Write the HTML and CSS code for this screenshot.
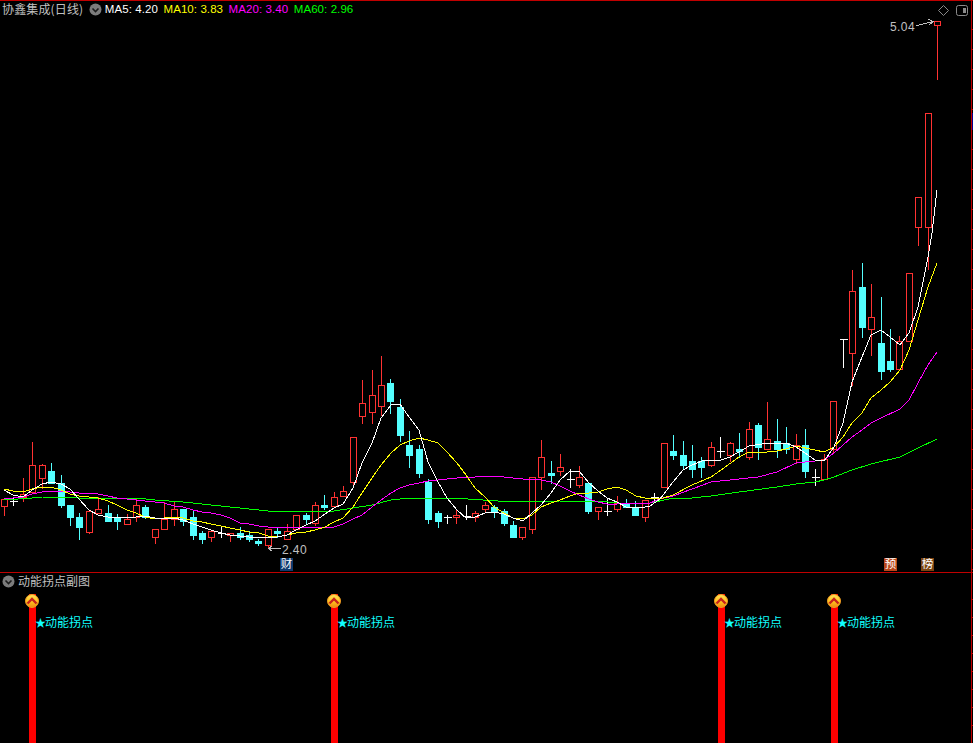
FILE: index.html
```html
<!DOCTYPE html>
<html lang="zh">
<head>
<meta charset="utf-8">
<title>协鑫集成(日线)</title>
<link rel="stylesheet" href="styles.css">
</head>
<body>
<svg class="defs" width="0" height="0"><defs><linearGradient id="capGrad" x1="0" y1="0" x2="0" y2="1"><stop offset="0" stop-color="#ffe45a"/><stop offset=".55" stop-color="#ffc21e"/><stop offset="1" stop-color="#f08a10"/></linearGradient></defs></svg>
<div class="terminal">
  <section class="main-panel">
    <svg id="chart" class="chart" width="973" height="572" viewBox="0 0 973 572"></svg>
    <header class="legend">
      <span class="stock-name">协鑫集成(日线)</span>
      <svg class="chevron-btn" width="13" height="13" viewBox="0 0 13 13"><circle cx="6.5" cy="6.5" r="6" fill="#7c7c7c"/><path d="M3.5 5.5 6.5 8.5 9.5 5.5" fill="none" stroke="#1c1c1c" stroke-width="1.6"/></svg>
      <span class="ma ma5">MA5: 4.20</span>
      <span class="ma ma10">MA10: 3.83</span>
      <span class="ma ma20">MA20: 3.40</span>
      <span class="ma ma60">MA60: 2.96</span>
    </header>
    <svg class="diamond" width="11" height="11" viewBox="0 0 11 11"><path d="M5.5 .5 10.5 5.5 5.5 10.5 .5 5.5Z" fill="none" stroke="#8a8a8a"/></svg>
    <svg class="toggle" width="13" height="12" viewBox="0 0 13 12"><rect x=".5" y=".5" width="11" height="10" rx="2" fill="none" stroke="#8a8a8a"/><rect x="7" y="3" width="3" height="5" fill="#8a8a8a"/></svg>
    <span class="price-label high-label">5.04</span>
    <span class="price-label low-label">2.40</span>
    <span class="tag tag-cai">财</span>
    <span class="tag tag-yu">预</span>
    <span class="tag tag-bang">榜</span>
  </section>
  <section class="sub-panel">
    <header class="sub-title">
      <svg class="chevron-btn" width="13" height="13" viewBox="0 0 13 13"><circle cx="6.5" cy="6.5" r="6" fill="#7c7c7c"/><path d="M3.5 5.5 6.5 8.5 9.5 5.5" fill="none" stroke="#1c1c1c" stroke-width="1.6"/></svg>
      <span class="stock-name">动能拐点副图</span>
    </header>
    <div id="signals"></div>
  </section>
  <div id="axis" class="axis"></div>
</div>
<script src="chart.js"></script>
</body>
</html>
```
FILE: styles.css
```css
* { box-sizing: border-box; }
html, body { margin: 0; padding: 0; background: #000; }
body { width: 973px; height: 743px; overflow: hidden; font-family: "Liberation Sans", sans-serif; }
.defs { position: absolute; }
.terminal { position: relative; width: 973px; height: 743px; background: #000; display: flex; flex-direction: column; border-top: 1px solid #c00000; }
.main-panel { position: relative; height: 572px; flex: none; border-bottom: 1px solid #c00000; }
.sub-panel { position: relative; flex: 1; }
.chart { position: absolute; left: 0; top: -1px; display: block; }
.legend { position: relative; display: flex; align-items: center; height: 16px; padding-left: 2px; }
.stock-name { color: #c0c0c0; font: 12px/16px "Noto Sans CJK SC", sans-serif; white-space: nowrap; }
.legend .stock-name { letter-spacing: .15px; }
.chevron-btn { flex: none; }
.legend .chevron-btn { margin-left: 6px; margin-right: 2.5px; }
.ma { font: 11.5px/16px "Liberation Sans", sans-serif; letter-spacing: .08px; margin-right: 5.5px; white-space: nowrap; }
.ma5 { color: #fff; }
.ma10 { color: #ff0; }
.ma20 { color: #f0f; }
.ma60 { color: #0f0; }
.diamond { position: absolute; left: 938px; top: 4px; }
.toggle { position: absolute; left: 956px; top: 4px; }
.price-label { position: absolute; color: #c0c0c0; font: 12px/12px "Liberation Sans", sans-serif; letter-spacing: .4px; }
.high-label { left: 890px; top: 20px; }
.low-label { left: 282px; top: 543px; }
.tag { position: absolute; width: 13px; height: 13px; color: #fff; font: 11.5px/13px "Liberation Sans", "Noto Sans CJK SC", sans-serif; text-align: center; top: 557px; }
.tag-cai { left: 280px; background: #0f3a6e; }
.tag-yu { left: 884px; background: #b8461a; }
.tag-bang { left: 921px; background: #7a4412; }
.sub-title { display: flex; align-items: center; height: 16px; padding-left: 2px; gap: 3px; }
.signal { position: absolute; top: 21px; bottom: 0; width: 7px; background: #fe0000; }
.signal-cap { position: absolute; top: 21px; width: 14px; height: 14px; }
.signal-label { position: absolute; top: 41px; color: #1ff; font: 12px/16px "Noto Sans CJK SC", sans-serif; white-space: nowrap; }
.signal-star { display: inline-block; width: 9px; font-size: 11px; text-indent: -1px; }
.axis { position: absolute; left: 971px; top: -1px; width: 2px; height: 743px; border-left: 1px solid #c00000; }
.tick { position: absolute; left: 0; width: 2px; height: 1px; background: #c00000; }
.axis-mark { position: absolute; left: 0; top: 113px; width: 2px; height: 17px; background: #000090; }
.wick { stroke-width: 1; shape-rendering: crispEdges; }
.up { stroke: #ff3232; fill: #000; }
.down { stroke: #54ffff; fill: #54ffff; }
.doji { stroke: #fff; fill: none; }
.ma-line { fill: none; stroke-width: 1; shape-rendering: crispEdges; stroke-linejoin: round; }
.l5 { stroke: #fff; }
.l10 { stroke: #ff0; }
.l20 { stroke: #f0f; }
.l60 { stroke: #0f0; }
.arrow { fill: none; stroke: #c0c0c0; stroke-width: 1; shape-rendering: crispEdges; }
.cap-disc { fill: url(#capGrad); stroke: #f09a20; }
.cap-chev { fill: none; stroke: #c8201c; stroke-width: 2.4; }
```
FILE: chart.js
```js
var NS = "http://www.w3.org/2000/svg";
var svg = document.getElementById("chart");
function el(tag, attrs, parent) {
  var e = document.createElementNS(NS, tag);
  for (var k in attrs) e.setAttribute(k, attrs[k]);
  (parent || svg).appendChild(e);
  return e;
}
// kind, high, body top, body bottom, low
var candles = [
 "u499,499,506,515","w498,501,501,505","u478,494,497,501","u442,465,492,492","u464,465,478,488","d463,471,483,483","d475,483,505,507","d505,505,517,525","d513,517,527,539","u511,511,532,533",
 "u497,509,513,513","d505,513,521,521","d514,518,521,529","u514,519,524,524","u499,505,517,521","d505,507,517,518","u529,529,537,543","u502,519,529,529","u502,509,519,525","d509,509,521,525",
 "d510,517,535,539","d531,533,539,543","u531,531,537,541","w527,533,533,537","u533,533,535,541","d527,533,537,539","d531,535,539,541","d539,541,543,545","u529,529,545,548","d528,531,533,537",
 "u524,531,539,539","u515,515,529,529","d513,515,519,523","u502,505,523,525","d495,505,507,509","u492,497,506,507","u486,491,496,496","u437,437,482,485","u380,403,416,423","u370,395,412,423",
 "u356,385,406,415","d379,383,401,413","d399,407,435,441","d431,445,455,467","d445,449,473,477","d479,482,519,523","d511,513,521,527","w515,517,517,523","u509,515,517,523","w505,516,516,519",
 "u511,513,517,521","u502,505,509,511","d505,507,511,517","d509,511,523,525","d521,525,537,537","u527,527,537,539","u477,477,529,533","u440,457,477,489","d461,473,475,483","u454,467,471,475",
 "w469,479,479,487","u466,477,485,487","d483,483,511,513","u507,507,511,519","w498,511,511,515","u496,503,509,511","d499,503,507,507","d501,507,515,515","u500,500,517,521","w493,497,497,500",
 "u443,443,487,487","d435,451,455,459","d441,455,465,469","d445,461,469,477","d457,461,467,477","u442,447,465,466","w437,451,451,457","u442,443,455,461","d433,449,451,457","u422,429,457,459",
 "d423,425,447,459","u402,439,449,449","d419,441,449,457","d427,443,449,453","u434,445,459,463","d429,445,471,477","w469,477,477,485","u454,459,479,479","u401,401,449,453","w339,339,339,367",
 "u270,291,353,385","d263,287,327,337","u284,317,329,355","d297,343,371,379","d329,361,369,371","u336,341,369,369","u273,273,341,341","u197,197,227,245","u113,113,227,269","u21,21,25,79"
];
var g = el("g", {});
candles.forEach(function (c, i) {
  var kind = c[0], v = c.slice(1).split(",").map(Number);
  var x = Math.round(4 + 9.425 * i) + 0.5;
  var cls = kind === "u" ? "up" : kind === "d" ? "down" : "doji";
  el("line", { x1: x, x2: x, y1: v[0], y2: v[3] + 1, "class": "wick " + cls }, g);
  if (kind === "w") {
    el("line", { x1: x - 3.5, x2: x + 4.5, y1: v[1] + .5, y2: v[1] + .5, "class": "wick doji" }, g);
  } else {
    el("rect", { x: x - 3, y: v[1] + .5, width: 6, height: Math.max(v[2] - v[1], 1), "class": "wick " + cls }, g);
  }
});
var lines = {
 l60: "4,500 32,498 42,497 79,498 117,498 136,498 155,500 183,502 202,504 230,507 249,509 268,511 334,511 353,508 372,505 391,500 409,498 453,498 498,501 520,502 560,501 598,501 617,503 650,503 669,499 692,498 711,496 739,492 777,487 796,484 815,482 824,480 834,477 852,470 871,464 900,457 918,448 937,439",
 l20: "4,498 13,498 23,497 32,494 42,492 51,491 61,491 70,492 79,493 89,493 98,494 108,496 117,498 127,499 136,500 145,501 155,502 164,503 174,506 183,507 193,510 202,512 211,513 221,515 230,518 240,523 249,524 259,526 268,527 287,528 325,527 334,527 343,524 353,519 362,515 372,507 381,500 391,493 400,488 409,485 419,483 428,481 438,480 447,479 457,478 475,477 485,476 494,476 504,477 513,478 523,479 532,479 541,480 551,482 560,486 570,491 579,495 589,499 598,502 607,504 617,504 626,503 636,503 650,503 660,499 673,496 692,489 711,482 739,479 758,477 777,472 796,463 815,461 824,460 834,453 843,445 852,437 862,430 871,423 881,418 900,409 909,400 918,383 928,365 937,352",
 l10: "4,489 13,491 23,492 32,489 42,487 51,487 61,490 70,494 79,496 98,498 108,501 117,505 127,510 136,513 145,517 155,519 164,518 174,517 183,518 193,521 202,522 211,524 221,526 230,528 240,530 249,532 259,533 268,536 277,537 287,535 296,533 306,532 315,530 325,527 334,522 343,518 353,507 362,493 372,478 381,465 391,453 400,445 409,441 419,438 428,440 438,443 447,452 457,463 466,475 475,488 485,497 494,507 504,513 513,518 523,519 532,515 541,507 551,503 560,500 570,496 579,493 589,493 598,492 607,489 617,487 626,490 636,496 645,498 660,499 673,495 692,485 711,477 721,470 739,457 749,452 758,453 777,451 786,449 796,446 815,450 824,452 834,447 843,437 852,423 862,413 871,398 881,390 890,382 900,370 909,350 918,320 928,287 937,263",
 l5: "4,490 13,495 23,497 32,490 42,484 51,482 61,484 70,489 79,499 89,510 98,515 108,517 117,518 127,517 136,517 145,516 155,518 164,518 174,518 183,520 193,524 202,527 211,530 221,533 230,535 240,536 249,537 259,538 268,537 277,537 287,535 296,530 306,525 315,521 325,514 334,508 343,504 353,488 362,463 372,443 381,418 391,405 400,404 409,417 419,430 428,462 438,482 447,498 457,510 466,518 475,517 485,513 494,512 504,514 513,518 523,521 532,513 541,505 551,493 560,480 570,471 579,471 589,483 598,491 607,498 617,502 626,507 636,508 645,507 650,506 660,499 673,482 683,470 692,465 702,461 721,460 730,457 739,452 749,446 768,443 786,443 796,447 805,453 815,460 824,461 834,447 843,423 852,382 862,357 871,335 881,330 890,337 900,345 909,333 918,307 928,257 932,233 937,190"
};
["l60", "l20", "l10", "l5"].forEach(function (k) {
  el("polyline", { points: lines[k], "class": "ma-line " + k });
});
// arrows to the high and low labels
el("path", { d: "M916.5 25.5 933.5 21.5M928.5 19.5 933.5 21.5 929.5 24.5", "class": "arrow" });
el("path", { d: "M280.5 548.5H268.5M272.5 545.5 268.5 548.5 272.5 551.5", "class": "arrow" });

// signal markers in the sub panel
var signals = document.getElementById("signals");
[32, 334, 721, 834].forEach(function (x) {
  var bar = document.createElement("div");
  bar.className = "signal";
  bar.style.left = (x - 3) + "px";
  signals.appendChild(bar);
  var cap = document.createElementNS(NS, "svg");
  cap.setAttribute("class", "signal-cap");
  cap.setAttribute("viewBox", "0 0 14 14");
  cap.style.left = (x - 7) + "px";
  el("circle", { cx: 7, cy: 7, r: 6.5, "class": "cap-disc" }, cap);
  el("path", { d: "M2.5 9.5 7 5 11.5 9.5", "class": "cap-chev" }, cap);
  signals.appendChild(cap);
  var label = document.createElement("span");
  label.className = "signal-label";
  var star = document.createElement("span");
  star.className = "signal-star";
  star.textContent = "★";
  label.appendChild(star);
  label.appendChild(document.createTextNode("动能拐点"));
  label.style.left = (x + 4) + "px";
  signals.appendChild(label);
});

// right axis ticks
var axis = document.getElementById("axis");
function tick(y) {
  var t = document.createElement("div");
  t.className = "tick";
  t.style.top = y + "px";
  axis.appendChild(t);
}
for (var y = 29; y < 572; y += 20) tick(y);
for (var y2 = 599; y2 < 743; y2 += 18) tick(y2);
var mark = document.createElement("div");
mark.className = "axis-mark";
axis.appendChild(mark);
```
